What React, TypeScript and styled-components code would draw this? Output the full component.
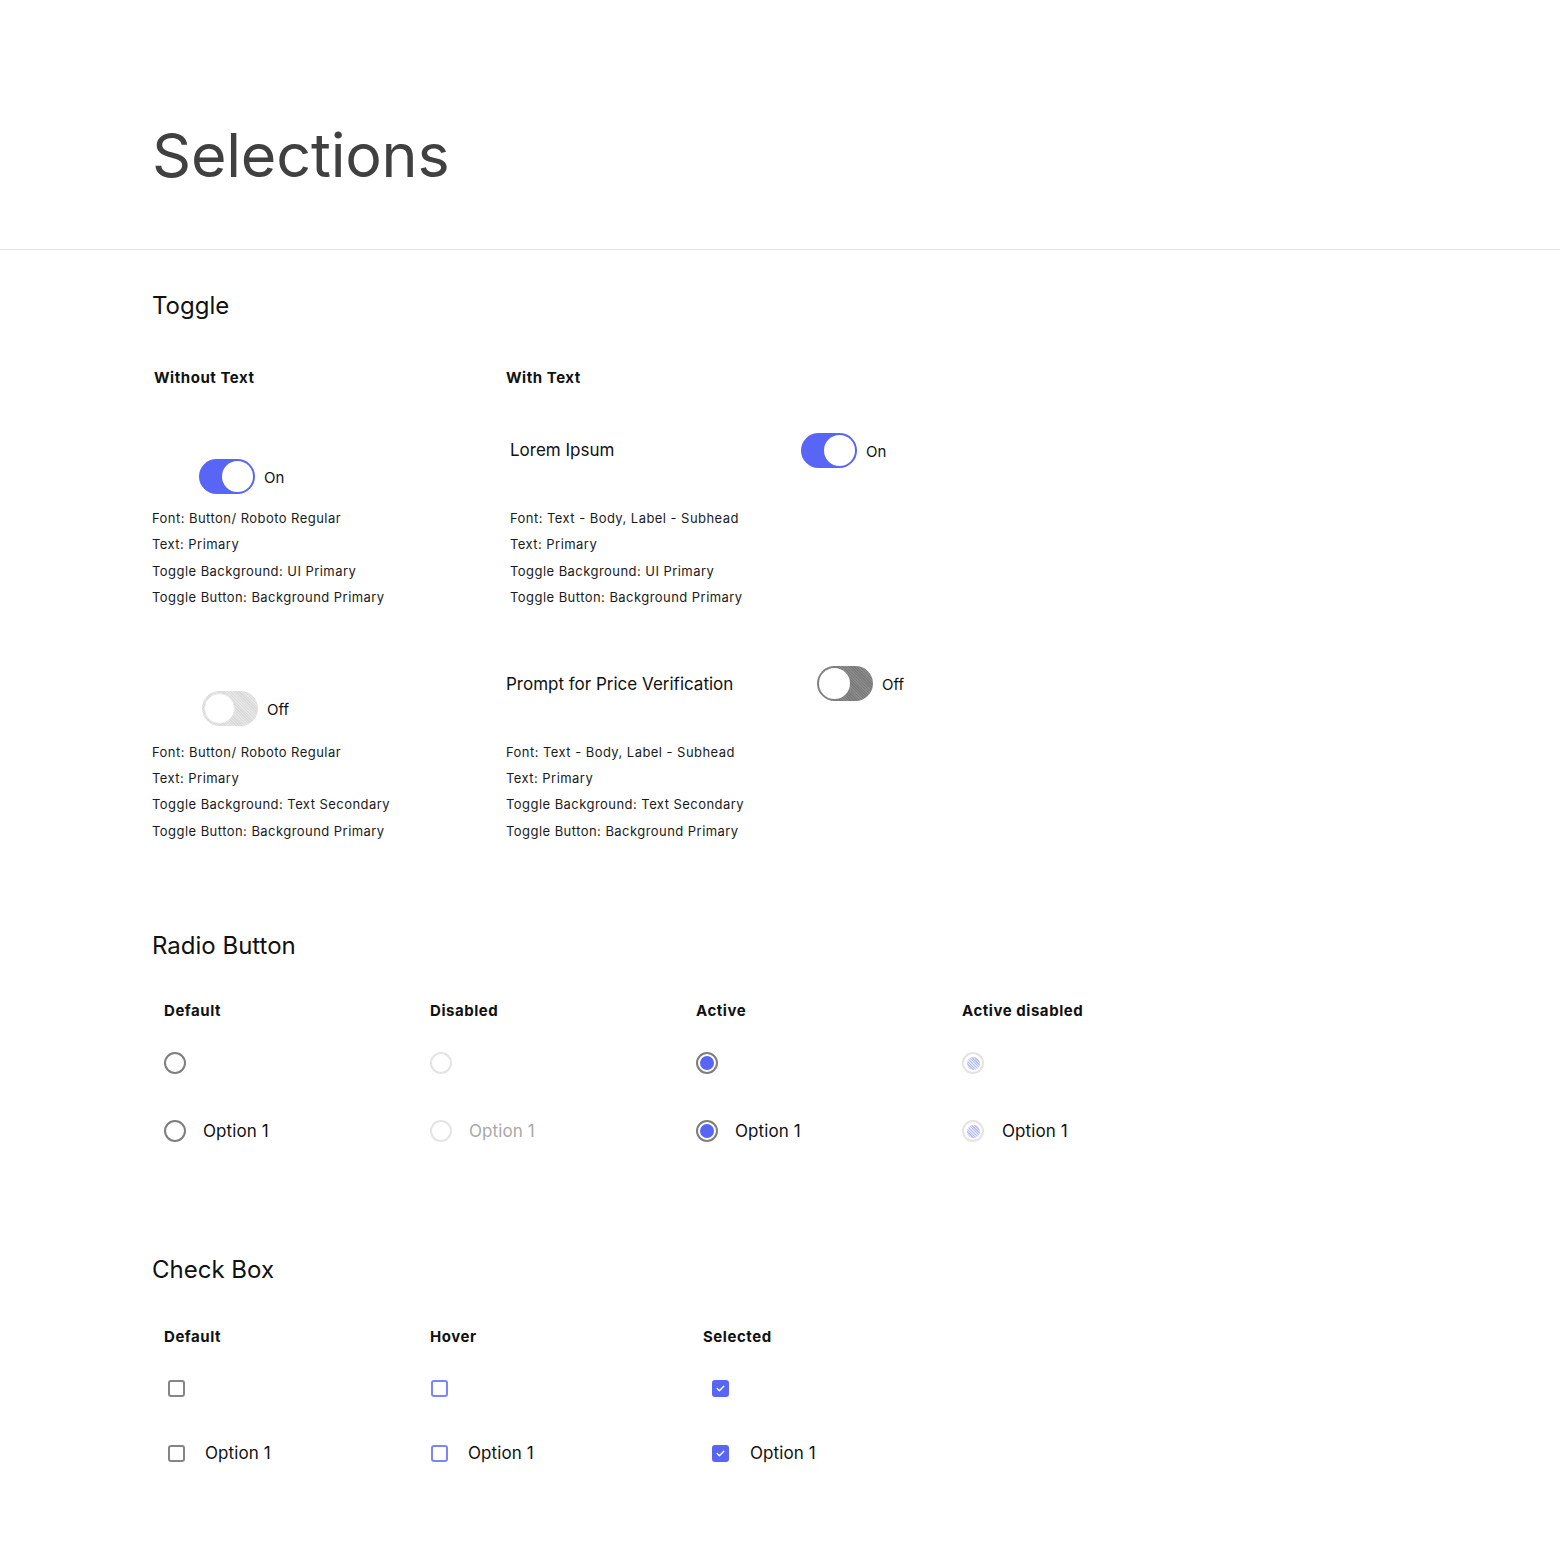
import React from 'react'
import styled, { createGlobalStyle, css } from 'styled-components'

const BLUE = '#5865f5'

const GlobalStyle = createGlobalStyle`
  html, body {
    margin: 0;
    padding: 0;
    background: #ffffff;
    font-family: Inter, "Noto Sans", sans-serif;
    color: #111111;
  }
`

const Header = styled.header`
  height: 250px;
  box-sizing: border-box;
  border-bottom: 1px solid #e2e2e2;
  padding: 118px 0 0 152px;
`

const PageTitle = styled.h1`
  margin: 0;
  font-size: 61px;
  line-height: 74px;
  font-weight: 400;
  color: #404040;
  letter-spacing: -0.2px;
`

const Main = styled.main`
  padding: 0 0 80px 152px;
`

const SectionTitle = styled.h2<{ $top: number }>`
  margin: ${(p) => p.$top}px 0 0 0;
  font-size: 24px;
  line-height: 30px;
  font-weight: 400;
  color: #111;
`

const ColumnHead = styled.h3<{ $indent?: number }>`
  margin: 0;
  padding-left: ${(p) => p.$indent ?? 0}px;
  font-size: 15px;
  line-height: 20px;
  font-weight: 700;
  letter-spacing: 0.55px;
  color: #111;
`

const ToggleGrid = styled.div`
  display: grid;
  grid-template-columns: 354px 420px;
  margin-top: 47px;
`

const ToggleColumn = styled.div`
  display: flex;
  flex-direction: column;
`

const ToggleBlock = styled.div<{ $top: number; $indent?: number }>`
  margin-top: ${(p) => p.$top}px;
  padding-left: ${(p) => p.$indent ?? 0}px;
`

const ToggleRow = styled.div<{ $indent?: number }>`
  display: flex;
  align-items: center;
  height: 36px;
  padding-left: ${(p) => p.$indent ?? 0}px;
`

const RowLabel = styled.span<{ $width: number }>`
  width: ${(p) => p.$width}px;
  font-size: 17px;
  color: #111;
`

const Track = styled.span<{ $state: 'on' | 'off' | 'offDark' }>`
  position: relative;
  display: inline-block;
  width: 56px;
  height: 35px;
  border-radius: 18px;
  box-sizing: border-box;
  flex-shrink: 0;
  ${(p) =>
    p.$state === 'on'
      ? css`
          background: ${BLUE};
        `
      : p.$state === 'off'
        ? css`
            background: repeating-linear-gradient(45deg, #d9d9d9 0 1px, #e6e6e6 1px 2px);
          `
        : css`
            background: repeating-linear-gradient(45deg, #7a7a7a 0 1px, #8a8a8a 1px 2px);
          `}
`

const Knob = styled.span<{ $on: boolean; $light?: boolean }>`
  position: absolute;
  top: 2px;
  ${(p) => (p.$on ? 'right: 2px;' : 'left: 2px;')}
  width: 31px;
  height: 31px;
  border-radius: 50%;
  background: #ffffff;
  box-sizing: border-box;
  border: ${(p) => (p.$light ? '1px solid #e6e6e6' : 'none')};
`

const ToggleText = styled.span`
  margin-left: 9px;
  padding-top: 2px;
  font-size: 15px;
  color: #111;
`

const Notes = styled.div<{ $top: number }>`
  margin-top: ${(p) => p.$top}px;
  display: flex;
  flex-direction: column;
`

const Note = styled.span`
  font-size: 13px;
  line-height: 26.4px;
  letter-spacing: 0.45px;
  color: #1a1a1a;
`

const OptionGrid = styled.div<{ $top: number }>`
  display: grid;
  grid-template-columns: repeat(4, 266px);
  margin-top: ${(p) => p.$top}px;
  padding-left: 12px;
`

const OptionColumn = styled.div<{ $shift?: number }>`
  display: flex;
  flex-direction: column;
  margin-left: ${(p) => p.$shift ?? 0}px;
`

const ControlRow = styled.div<{ $top: number }>`
  display: flex;
  align-items: center;
  margin-top: ${(p) => p.$top}px;
  height: 24px;
`

const OptionLabel = styled.span<{ $muted?: boolean; $gap: number }>`
  margin-left: ${(p) => p.$gap}px;
  font-size: 17px;
  letter-spacing: 0.1px;
  color: ${(p) => (p.$muted ? '#a8a8a8' : '#111')};
`

type RadioKind = 'default' | 'disabled' | 'active' | 'activeDisabled'

const Radio = styled.span<{ $kind: RadioKind }>`
  display: inline-flex;
  align-items: center;
  justify-content: center;
  width: 22px;
  height: 22px;
  border-radius: 50%;
  box-sizing: border-box;
  flex-shrink: 0;
  border: 2px solid
    ${(p) => (p.$kind === 'disabled' || p.$kind === 'activeDisabled' ? '#e4e4e4' : '#7e7e7e')};
  ${(p) =>
    p.$kind === 'active' &&
    css`
      &::after {
        content: '';
        width: 14px;
        height: 14px;
        border-radius: 50%;
        background: ${BLUE};
      }
    `}
  ${(p) =>
    p.$kind === 'activeDisabled' &&
    css`
      &::after {
        content: '';
        width: 13px;
        height: 13px;
        border-radius: 50%;
        background: repeating-linear-gradient(45deg, #b9bef4 0 1px, #e0e3fb 1px 2px);
      }
    `}
`

type BoxKind = 'default' | 'hover' | 'selected'

const Box = styled.span<{ $kind: BoxKind; $indent: number }>`
  display: inline-flex;
  align-items: center;
  justify-content: center;
  width: 17px;
  height: 17px;
  border-radius: 3px;
  box-sizing: border-box;
  flex-shrink: 0;
  margin-left: ${(p) => p.$indent}px;
  ${(p) =>
    p.$kind === 'default'
      ? css`
          border: 2px solid #858585;
        `
      : p.$kind === 'hover'
        ? css`
            border: 2px solid #7a84ff;
          `
        : css`
            background: ${BLUE};
          `}
`

function Check() {
  return (
    <svg width="11" height="11" viewBox="0 0 11 11" fill="none">
      <path d="M2.2 5.6 L4.4 7.7 L8.8 3.2" stroke="#fff" strokeWidth="1.4" strokeLinecap="round" strokeLinejoin="round" />
    </svg>
  )
}

function Toggle({ on, dark }: { on: boolean; dark?: boolean }) {
  return (
    <Track $state={on ? 'on' : dark ? 'offDark' : 'off'}>
      <Knob $on={on} $light={!on && !dark} />
    </Track>
  )
}

function NoteList({ lines, top }: { lines: string[]; top: number }) {
  return (
    <Notes $top={top}>
      {lines.map((l) => (
        <Note key={l}>{l}</Note>
      ))}
    </Notes>
  )
}

const radioCols: { head: string; kind: RadioKind }[] = [
  { head: 'Default', kind: 'default' },
  { head: 'Disabled', kind: 'disabled' },
  { head: 'Active', kind: 'active' },
  { head: 'Active disabled', kind: 'activeDisabled' },
]

const boxCols: { head: string; kind: BoxKind; gap: number; indent: number; shift: number }[] = [
  { head: 'Default', kind: 'default', gap: 20, indent: 4, shift: 0 },
  { head: 'Hover', kind: 'hover', gap: 20, indent: 1, shift: 0 },
  { head: 'Selected', kind: 'selected', gap: 21, indent: 9, shift: 7 },
]

export default function App() {
  return (
    <>
      <GlobalStyle />
      <Header>
        <PageTitle>Selections</PageTitle>
      </Header>
      <Main>
        <SectionTitle $top={41}>Toggle</SectionTitle>
        <ToggleGrid>
          <ToggleColumn>
            <ColumnHead $indent={2}>Without Text</ColumnHead>
            <ToggleBlock $top={70}>
              <ToggleRow $indent={47}>
                <Toggle on />
                <ToggleText>On</ToggleText>
              </ToggleRow>
              <NoteList
                top={11}
                lines={[
                  'Font: Button/ Roboto Regular',
                  'Text: Primary',
                  'Toggle Background: UI Primary',
                  'Toggle Button: Background Primary',
                ]}
              />
            </ToggleBlock>
            <ToggleBlock $top={80}>
              <ToggleRow $indent={50}>
                <Toggle on={false} />
                <ToggleText>Off</ToggleText>
              </ToggleRow>
              <NoteList
                top={12}
                lines={[
                  'Font: Button/ Roboto Regular',
                  'Text: Primary',
                  'Toggle Background: Text Secondary',
                  'Toggle Button: Background Primary',
                ]}
              />
            </ToggleBlock>
          </ToggleColumn>
          <ToggleColumn>
            <ColumnHead>With Text</ColumnHead>
            <ToggleBlock $top={44} $indent={4}>
              <ToggleRow>
                <RowLabel $width={291}>Lorem Ipsum</RowLabel>
                <Toggle on />
                <ToggleText>On</ToggleText>
              </ToggleRow>
              <NoteList
                top={37}
                lines={[
                  'Font: Text - Body, Label - Subhead',
                  'Text: Primary',
                  'Toggle Background: UI Primary',
                  'Toggle Button: Background Primary',
                ]}
              />
            </ToggleBlock>
            <ToggleBlock $top={55}>
              <ToggleRow>
                <RowLabel $width={311}>Prompt for Price Verification</RowLabel>
                <Toggle on={false} dark />
                <ToggleText>Off</ToggleText>
              </ToggleRow>
              <NoteList
                top={37}
                lines={[
                  'Font: Text - Body, Label - Subhead',
                  'Text: Primary',
                  'Toggle Background: Text Secondary',
                  'Toggle Button: Background Primary',
                ]}
              />
            </ToggleBlock>
          </ToggleColumn>
        </ToggleGrid>

        <SectionTitle $top={87}>Radio Button</SectionTitle>
        <OptionGrid $top={40}>
          {radioCols.map((c) => (
            <OptionColumn key={c.head}>
              <ColumnHead>{c.head}</ColumnHead>
              <ControlRow $top={30}>
                <Radio $kind={c.kind} />
              </ControlRow>
              <ControlRow $top={44}>
                <Radio $kind={c.kind} />
                <OptionLabel $gap={c.kind === 'activeDisabled' ? 18 : 17} $muted={c.kind === 'disabled'}>
                  Option 1
                </OptionLabel>
              </ControlRow>
            </OptionColumn>
          ))}
        </OptionGrid>

        <SectionTitle $top={112}>Check Box</SectionTitle>
        <OptionGrid $top={42}>
          {boxCols.map((c) => (
            <OptionColumn key={c.head} $shift={c.shift}>
              <ColumnHead>{c.head}</ColumnHead>
              <ControlRow $top={29}>
                <Box $kind={c.kind} $indent={c.indent}>
                  {c.kind === 'selected' && <Check />}
                </Box>
              </ControlRow>
              <ControlRow $top={41}>
                <Box $kind={c.kind} $indent={c.indent}>
                  {c.kind === 'selected' && <Check />}
                </Box>
                <OptionLabel $gap={c.gap}>Option 1</OptionLabel>
              </ControlRow>
            </OptionColumn>
          ))}
        </OptionGrid>
      </Main>
    </>
  )
}
